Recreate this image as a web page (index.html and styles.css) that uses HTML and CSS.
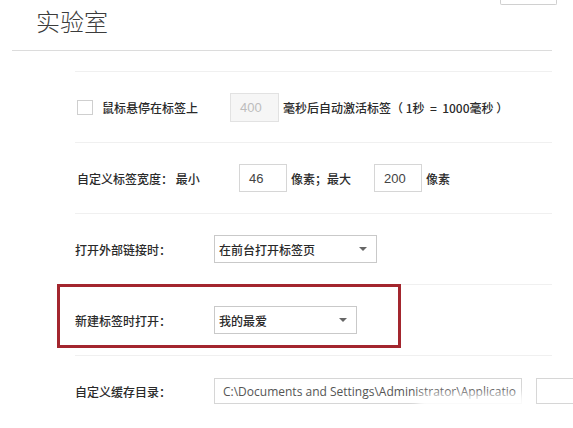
FILE: index.html
```html
<!DOCTYPE html>
<html lang="zh-CN">
<head>
<meta charset="utf-8">
<title>实验室</title>
<link rel="stylesheet" href="styles.css">
</head>
<body>
<div class="header">
  <h1 class="title">实验室</h1>
  <div class="corner-btn"></div>
</div>
<div class="divider"></div>
<div class="rows">
  <div class="row">
    <label class="check"><span class="box"></span><span class="check-text">鼠标悬停在标签上</span></label>
    <span class="field field-disabled delay">400</span>
    <span class="text after">毫秒后自动激活标签（ 1秒 &nbsp;=&nbsp; 1000毫秒 ）</span>
  </div>
  <div class="row">
    <span class="label label-width">自定义标签宽度： 最小</span>
    <span class="field small">46</span>
    <span class="text after">像素；最大</span>
    <span class="field small max">200</span>
    <span class="text after">像素</span>
  </div>
  <div class="row">
    <span class="label">打开外部链接时：</span>
    <div class="select wide"><span>在前台打开标签页</span><i class="arrow"></i></div>
  </div>
  <div class="row highlighted">
    <span class="label">新建标签时打开：</span>
    <div class="select narrow"><span>我的最爱</span><i class="arrow"></i></div>
    <div class="highlight"></div>
  </div>
  <div class="row cache">
    <span class="label">自定义缓存目录：</span>
    <span class="field path">C:\Documents and Settings\Administrator\Applicatio</span>
    <span class="field browse"></span>
    <div class="watermark"></div>
  </div>
</div>
</body>
</html>
```

FILE: styles.css
```css
html, body {
  margin: 0;
  padding: 0;
  background: #ffffff;
  overflow: hidden;
}
body {
  width: 573px;
  height: 428px;
  font-family: "Noto Sans CJK SC", "Liberation Sans", sans-serif;
  font-size: 12px;
  font-weight: 500;
  color: #2a2a2a;
}
.header {
  display: flex;
  align-items: flex-start;
  height: 50px;
}
.title {
  margin: 0 0 0 36px;
  padding-top: 4px;
  font-size: 24px;
  line-height: 34px;
  font-weight: 300;
  color: #3c3c3c;
}
.corner-btn {
  margin-left: auto;
  margin-right: 16px;
  width: 57px;
  height: 5px;
  border: 1px solid #d0d0d0;
  border-top: none;
  border-radius: 0 0 2px 2px;
  box-sizing: border-box;
}
.divider {
  height: 1px;
  background: #dcdcdc;
  margin: 0 21px 0 12px;
}
.rows {
  margin: 20px 21px 0 75px;
}
.row {
  position: relative;
  display: flex;
  align-items: center;
  height: 70px;
  border-top: 1px solid #f0f0f0;
  white-space: nowrap;
}
.row > * {
  flex-shrink: 0;
}
.check {
  display: flex;
  align-items: center;
  margin-left: 2px;
  width: 153px;
}
.box {
  width: 16px;
  height: 15px;
  border: 1px solid #cfcfcf;
  box-sizing: border-box;
  background: #fff;
}
.check-text {
  margin-left: 9px;
}
.field {
  display: inline-flex;
  align-items: center;
  box-sizing: border-box;
  border: 1px solid #d6d6d6;
  background: #fff;
  font-family: "Liberation Sans", "DejaVu Sans", sans-serif;
  font-weight: 400;
  font-size: 13px;
  color: #444;
  padding-left: 9px;
  white-space: nowrap;
  overflow: hidden;
}
.field-disabled {
  background: #f6f6f6;
  color: #bdbdbd;
  border-color: #e2e2e2;
}
.delay {
  width: 49px;
  height: 29px;
}
.text.after {
  margin-left: 4px;
}
.label-width {
  margin-left: 2px;
  width: 162px;
}
.small {
  width: 48px;
  height: 28px;
}
.small.max {
  margin-left: 23px;
}
.label {
  width: 139px;
}
.label-width.label {
  width: 162px;
}
.select {
  display: flex;
  align-items: center;
  box-sizing: border-box;
  height: 28px;
  border: 1px solid #c9c9c9;
  background: #fff;
  padding: 0 9px 0 4px;
}
.select span {
  flex: 1;
}
.wide {
  width: 163px;
}
.narrow {
  width: 143px;
}
.arrow {
  width: 0;
  height: 0;
  border-left: 4px solid transparent;
  border-right: 4px solid transparent;
  border-top: 4px solid #666;
}
.highlight {
  position: absolute;
  left: -18px;
  top: -1px;
  width: 344px;
  height: 64px;
  box-sizing: border-box;
  border: 3px solid #a3262e;
  pointer-events: none;
}
.path {
  width: 308px;
  height: 26px;
  padding-left: 8px;
  font-family: "Open Sans", "Liberation Sans", sans-serif;
  font-size: 12px;
  color: #555;
}
.browse {
  margin-left: 14px;
  width: 60px;
  height: 26px;
}
.watermark {
  position: absolute;
  left: 343px;
  top: 38px;
  width: 112px;
  height: 40px;
  background: #ffffff;
  filter: blur(4px);
  opacity: 0.9;
}
```
